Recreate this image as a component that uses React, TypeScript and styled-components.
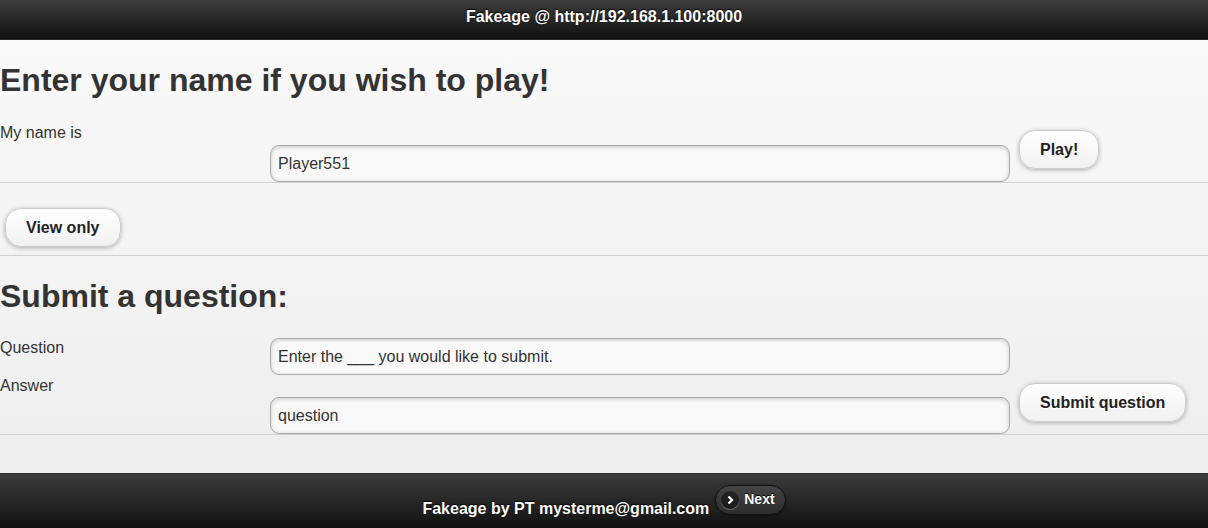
import React from "react";
import styled, { createGlobalStyle } from "styled-components";

const Global = createGlobalStyle`
  html, body { margin: 0; padding: 0; }
  body {
    font-family: "Liberation Sans", Arial, Helvetica, sans-serif;
    background: #eeeeee;
    color: #333;
  }
  * { box-sizing: border-box; }
`;

const Page = styled.div`
  display: flex;
  flex-direction: column;
  min-height: 100vh;
`;

const Bar = styled.div`
  background: linear-gradient(#3c3c3c, #111111);
  color: #fff;
  font-weight: bold;
  font-size: 16px;
  text-shadow: 0 -1px 1px #000;
`;

const Header = styled(Bar)`
  height: 40px;
  border-bottom: 1px solid #2a2a2a;
  display: flex;
  justify-content: center;
  padding-top: 8px;
  line-height: 18px;
`;

const Main = styled.main`
  flex: 1;
  background: linear-gradient(#f9f9f9, #eeeeee);
`;

const Section = styled.section<{ $line?: boolean }>`
  border-bottom: ${(p) => (p.$line ? "1px solid #d0d0d0" : "none")};
`;

const Heading = styled.h2<{ $after: number }>`
  margin: 21px 0 ${(p) => p.$after}px;
  font-size: 32px;
  line-height: 38px;
  font-weight: bold;
  color: #333;
`;

const Row = styled.div`
  display: flex;
  align-items: flex-start;
`;

const Label = styled.label`
  width: 270px;
  flex: none;
  padding-top: 1px;
  font-size: 16px;
  line-height: 20px;
  color: #333;
`;

const Input = styled.input<{ $top: number }>`
  width: 740px;
  height: 37px;
  flex: none;
  margin: ${(p) => p.$top}px 0 0;
  padding: 0 7px;
  border: 1px solid #aaaaaa;
  border-radius: 9px;
  background: #f9f9f9;
  box-shadow: inset 0 1px 4px rgba(0, 0, 0, 0.2);
  font-family: "Liberation Sans", Arial, sans-serif;
  font-size: 16px;
  color: #333;
  outline: none;
`;

const Button = styled.button<{ $top?: number; $left?: number }>`
  height: 39px;
  margin: ${(p) => p.$top ?? 0}px 0 0 ${(p) => p.$left ?? 0}px;
  padding: 0 20px;
  border: 1px solid #cccccc;
  border-radius: 16px;
  background: linear-gradient(#ffffff, #f1f1f1);
  box-shadow: 0 1px 4px rgba(0, 0, 0, 0.3);
  font-family: "Liberation Sans", Arial, sans-serif;
  font-size: 16px;
  font-weight: bold;
  color: #222;
  text-shadow: 0 1px 0 #fff;
  cursor: pointer;
`;

const ButtonRow = styled.div`
  padding: 25px 0 8px 5px;
  display: flex;
`;

const Footer = styled(Bar)`
  height: 55px;
  border-top: 1px solid #2a2a2a;
  display: flex;
  justify-content: center;
  align-items: flex-start;
  padding-top: 11px;
`;

const FooterText = styled.span`
  margin-top: 14px;
  line-height: 20px;
`;

const NextButton = styled.button`
  height: 30px;
  margin-left: 6px;
  display: flex;
  align-items: center;
  gap: 5px;
  padding: 0 10px 2px 5px;
  border: 1px solid #111;
  border-radius: 15px;
  background: linear-gradient(#444444, #2d2d2d);
  box-shadow: 0 1px 3px rgba(0, 0, 0, 0.4);
  color: #fff;
  font-family: "Liberation Sans", Arial, sans-serif;
  font-size: 14px;
  font-weight: bold;
  text-shadow: 0 -1px 1px #000;
`;

const IconCircle = styled.span`
  width: 18px;
  height: 18px;
  border-radius: 50%;
  background: rgba(0, 0, 0, 0.45);
  box-shadow: 0 1px 0 rgba(255, 255, 255, 0.3);
  display: flex;
  align-items: center;
  justify-content: center;
  margin-top: 2px;
`;

export default function App() {
  return (
    <Page>
      <Global />
      <Header>Fakeage @ http://192.168.1.100:8000</Header>
      <Main>
        <Section $line>
          <Heading $after={23}>Enter your name if you wish to play!</Heading>
          <Row>
            <Label>My name is</Label>
            <Input $top={23} defaultValue="Player551" />
            <Button $top={8} $left={9}>Play!</Button>
          </Row>
        </Section>
        <Section $line>
          <ButtonRow>
            <Button>View only</Button>
          </ButtonRow>
        </Section>
        <Section $line>
          <Heading $after={22}>Submit a question:</Heading>
          <Row>
            <Label>Question</Label>
            <Input $top={1} defaultValue="Enter the ___ you would like to submit." />
          </Row>
          <Row>
            <Label>Answer</Label>
            <Input $top={22} defaultValue="question" />
            <Button $top={8} $left={9}>Submit question</Button>
          </Row>
        </Section>
      </Main>
      <Footer>
        <FooterText>Fakeage by PT mysterme@gmail.com</FooterText>
        <NextButton>
          <IconCircle>
            <svg width="10" height="10" viewBox="0 0 10 10">
              <path d="M3.5 1.5 L7 5 L3.5 8.5" stroke="#fff" strokeWidth="2.2" fill="none" />
            </svg>
          </IconCircle>
          Next
        </NextButton>
      </Footer>
    </Page>
  );
}
